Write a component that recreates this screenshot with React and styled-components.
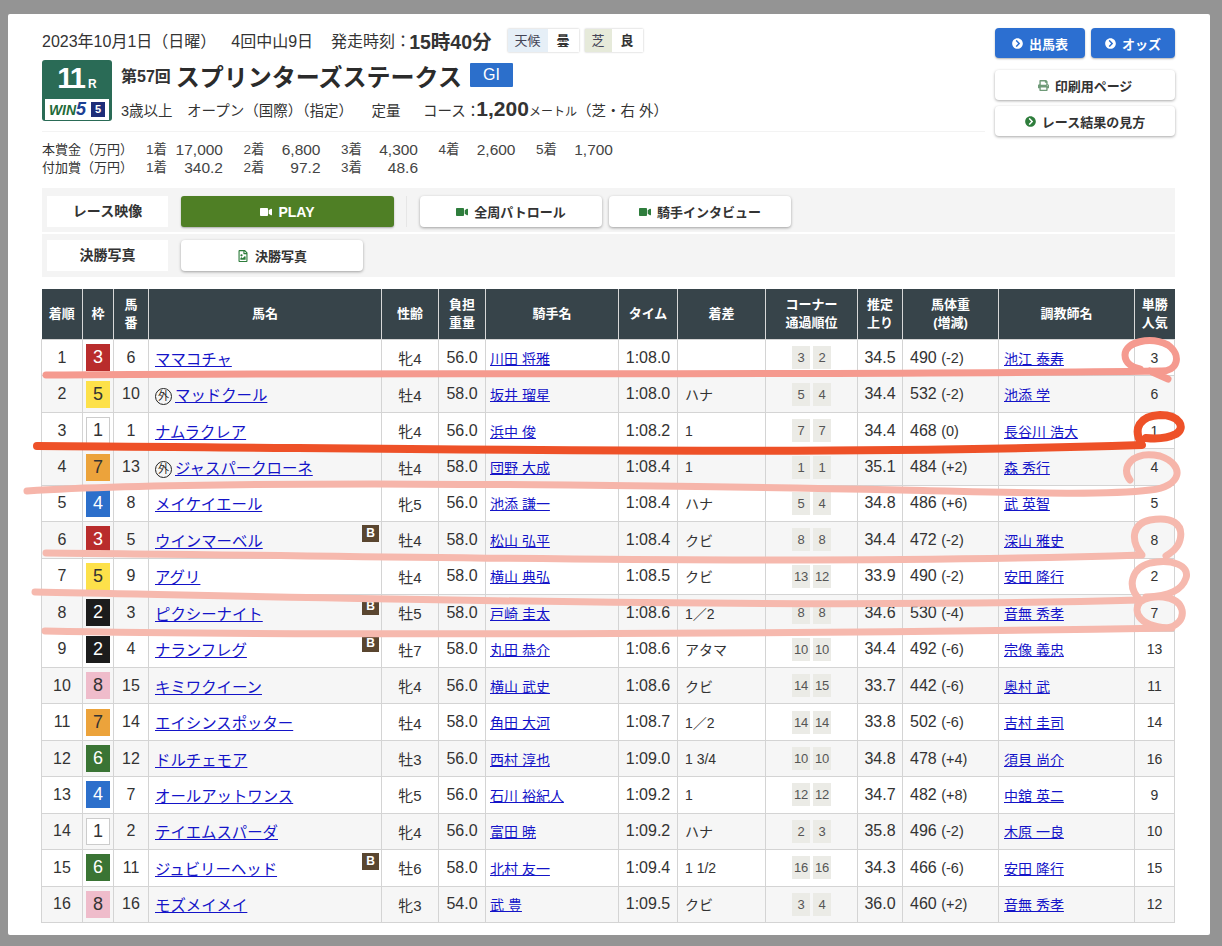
import styled, { createGlobalStyle } from "styled-components"
import { FaChevronCircleRight, FaPrint, FaVideo, FaRegFileImage } from "react-icons/fa"

const GlobalStyle = createGlobalStyle`
  html, body {
    margin: 0;
    padding: 0;
    background: #949494;
  }
  body {
    font-family: "Liberation Sans", "Noto Sans CJK JP", sans-serif;
    color: #333;
  }
`

const Page = styled.div`
  width: 1222px;
  height: 946px;
  padding: 14px 12px 11px 8px;
  box-sizing: border-box;
  overflow: hidden;
  position: relative;
`

const Sheet = styled.div`
  height: 921px;
  background: #fff;
  padding: 14px 35px 0 34px;
  box-sizing: border-box;
  border-radius: 2px;
`

const Head = styled.div`
  display: flex;
  justify-content: space-between;
  height: 160px;
`

const HeadLeft = styled.div`
  width: 943px;
`

const DateRow = styled.div`
  display: flex;
  align-items: center;
  height: 24px;
  margin-bottom: 8px;
  font-size: 16px;
  white-space: pre;
`

const DatePart = styled.span`
  margin-left: ${(p) => p.$gap}px;
`

const StartTime = styled.strong`
  font-size: 19.5px;
  margin-left: -2px;
`

const Chips = styled.div`
  display: flex;
  margin-left: ${(p) => p.$gap}px;
  box-shadow: 0 0 2px rgba(0, 0, 0, 0.25);
  font-size: 13px;
  height: 23px;
`

const ChipKey = styled.span`
  padding: 0 7px;
  line-height: 23px;
  background: ${(p) => p.$bg};
  color: #445;
`

const ChipValue = styled.span`
  padding: 0 9px;
  line-height: 23px;
  background: #fff;
  font-weight: 700;
`

const TitleRow = styled.div`
  display: flex;
  gap: 9px;
`

const RaceLogo = styled.div`
  width: 70px;
  height: 61px;
  background: #2a6b56;
  border-radius: 3px;
  padding: 3px;
  box-sizing: border-box;
  display: flex;
  flex-direction: column;
  flex: none;
`

const RaceNumber = styled.div`
  flex: 1;
  color: #fff;
  font-size: 29px;
  font-weight: 700;
  text-align: center;
  line-height: 30px;
  letter-spacing: -2px;
  small {
    font-size: 12px;
    letter-spacing: 0;
    margin-left: 4px;
  }
`

const WinFive = styled.div`
  height: 25px;
  background: #fff;
  display: flex;
  align-items: center;
  justify-content: center;
  gap: 5px;
  font-style: italic;
  font-weight: 700;
  font-size: 14px;
  color: #1f6b3a;
`

const WinBig = styled.span`
  color: #1c3f94;
  font-size: 18px;
  margin-left: -5px;
`

const FiveBox = styled.span`
  width: 14px;
  height: 15px;
  background: #1d2d78;
  color: #fff;
  font-size: 11px;
  font-style: normal;
  line-height: 15px;
  text-align: center;
`

const TitleText = styled.div`
  flex: 1;
  padding-top: 2px;
`

const RaceName = styled.div`
  display: flex;
  align-items: center;
  height: 26px;
  margin-bottom: 9px;
  font-weight: 700;
`

const Round = styled.span`
  font-size: 16px;
  margin-right: 5px;
`

const Name = styled.span`
  font-size: 24px;
  color: #2b2b2b;
`

const Grade = styled.span`
  width: 43px;
  height: 24px;
  margin-left: 8px;
  background: #2c6fcb;
  color: #fff;
  font-size: 16px;
  font-weight: 400;
  line-height: 24px;
  text-align: center;
  border-radius: 1px;
`

const Conditions = styled.div`
  display: flex;
  align-items: baseline;
  font-size: 14.5px;
  white-space: pre;
  height: 24px;
  strong {
    font-size: 21px;
    margin-left: -4px;
  }
  small {
    font-size: 12px;
  }
`

const Prizes = styled.div`
  margin-top: 10px;
  padding-top: 9px;
  border-top: 1px solid #f3f3f3;
  font-size: 13px;
  line-height: 18px;
`

const PrizeRow = styled.div`
  display: flex;
`

const PrizeLabel = styled.span`
  width: 104px;
  flex: none;
`

const Prize = styled.span`
  width: 97.5px;
  flex: none;
  display: flex;
  justify-content: space-between;
  padding-right: 20.5px;
  box-sizing: border-box;
  font-size: 15.5px;
  color: #444;
  i {
    font-style: normal;
    font-size: 13.5px;
  }
`

const HeadRight = styled.div`
  width: 180px;
  display: flex;
  flex-direction: column;
`

const BlueRow = styled.div`
  display: flex;
  gap: 6px;
  margin-bottom: 12px;
`

const BlueButton = styled.a`
  flex: ${(p) => p.$w};
  height: 30px;
  background: #2c6fd1;
  color: #fff;
  border-radius: 4px;
  font-size: 13px;
  font-weight: 700;
  display: flex;
  align-items: center;
  justify-content: center;
  gap: 6px;
  box-shadow: 0 1px 2px rgba(0, 0, 0, 0.3);
  svg {
    font-size: 11px;
  }
`

const WhiteButton = styled.a`
  height: ${(p) => p.$h || 30}px;
  width: ${(p) => p.$w || 180}px;
  background: #fff;
  color: #333;
  border-radius: 4px;
  font-size: 13px;
  font-weight: 700;
  display: flex;
  align-items: center;
  justify-content: center;
  gap: 6px;
  margin-bottom: 6px;
  box-shadow: 0 1px 3px rgba(0, 0, 0, 0.35);
  flex: none;
  svg {
    font-size: ${(p) => p.$icon || 11}px;
    color: ${(p) => p.$color || "#2e7d3c"};
  }
`

const MediaPanel = styled.div`
  display: flex;
  flex-direction: column;
  gap: 2px;
`

const MediaRow = styled.div`
  background: #f4f4f4;
  height: ${(p) => p.$h}px;
  padding: ${(p) => p.$top}px 5px 0;
  box-sizing: border-box;
  display: flex;
  gap: 7px;
`

const MediaLabel = styled.div`
  width: 121px;
  height: 31px;
  margin-right: 6px;
  background: #fff;
  font-size: 14px;
  font-weight: 700;
  line-height: 31px;
  text-align: center;
`

const PlayButton = styled.a`
  width: 213px;
  height: 31px;
  background: #4f7f25;
  color: #fff;
  border-radius: 3px;
  font-size: 14px;
  font-weight: 700;
  display: flex;
  align-items: center;
  justify-content: center;
  gap: 6px;
  box-shadow: 0 1px 2px rgba(0, 0, 0, 0.3);
  svg {
    font-size: 12px;
  }
`

const Divider = styled.span`
  width: 1px;
  height: 31px;
  margin: 0 6px 0 5px;
  background: #e6e6e6;
`

const Results = styled.table`
  width: 1133px;
  margin: 12px 0 0 -1px;
  border-collapse: collapse;
  table-layout: fixed;
  font-size: 16px;
  color: #333;
`

const Th = styled.th`
  height: 50px;
  padding: 0;
  background: #37444a;
  color: #fff;
  font-size: 13px;
  line-height: 18px;
  font-weight: 700;
  border-left: 1px solid #d8d8d8;
  &:first-child {
    border-left: 0;
  }
`

const Row = styled.tr`
  height: 36.44px;
  background: ${(p) => (p.$even ? "#f6f6f6" : "#fff")};
`

const Td = styled.td`
  padding: 0 0 0 ${(p) => p.$pad || 0}px;
  border: 1px solid #d4d4d4;
  text-align: ${(p) => (p.$pad ? "left" : "center")};
  font-size: ${(p) => p.$size || 16}px;
  white-space: nowrap;
  position: relative;
`

const Frame = styled.span`
  display: inline-block;
  width: 24px;
  height: 27px;
  line-height: 27px;
  font-size: 18px;
  vertical-align: middle;
  background: ${(p) => p.$bg};
  color: ${(p) => p.$fg};
  box-shadow: ${(p) => (p.$line ? "inset 0 0 0 1px #ccc" : "none")};
`

const HorseLink = styled.a`
  color: #1414c8;
  text-decoration: underline;
  font-size: 15.4px;
`

const PersonLink = styled.a`
  color: #1414c8;
  text-decoration: underline;
  font-size: 14px;
`

const ForeignMark = styled.span`
  display: inline-block;
  width: 15px;
  height: 15px;
  margin-right: 3px;
  border: 1px solid #222;
  border-radius: 50%;
  font-size: 11px;
  line-height: 15px;
  text-align: center;
  vertical-align: 1px;
  color: #222;
`

const BlinkerMark = styled.span`
  position: absolute;
  top: 3px;
  right: 2px;
  width: 17px;
  height: 17px;
  background: #5a4630;
  color: #fff;
  font-size: 12px;
  font-weight: 700;
  line-height: 17px;
  text-align: center;
`

const Corners = styled.span`
  display: inline-flex;
  gap: 3px;
  vertical-align: middle;
`

const Corner = styled.span`
  width: 18px;
  height: 23px;
  line-height: 23px;
  background: #ebebe6;
  color: #555;
  font-size: 13px;
  letter-spacing: -0.3px;
`

const Weight = styled.span`
  small {
    font-size: 14.5px;
  }
`

const Scribble = styled.svg`
  position: absolute;
  left: 0;
  top: 0;
  pointer-events: none;
`

const frames = {
  1: { bg: "#fff", fg: "#333", line: true },
  2: { bg: "#1c1c1c", fg: "#fff" },
  3: { bg: "#b92c2c", fg: "#fff" },
  4: { bg: "#2c6fcb", fg: "#fff" },
  5: { bg: "#fde14a", fg: "#333" },
  6: { bg: "#3a7434", fg: "#fff" },
  7: { bg: "#eca33b", fg: "#333" },
  8: { bg: "#efbccb", fg: "#333" },
}

const columns = [
  { w: 41, label: ["着順"] },
  { w: 31, label: ["枠"] },
  { w: 35, label: ["馬", "番"] },
  { w: 233, label: ["馬名"] },
  { w: 57, label: ["性齢"] },
  { w: 47, label: ["負担", "重量"] },
  { w: 133, label: ["騎手名"] },
  { w: 59, label: ["タイム"] },
  { w: 88, label: ["着差"] },
  { w: 92, label: ["コーナー", "通過順位"] },
  { w: 45, label: ["推定", "上り"] },
  { w: 96, label: ["馬体重", "(増減)"] },
  { w: 136, label: ["調教師名"] },
  { w: 40, label: ["単勝", "人気"] },
]

const runners = [
  [3, 6, "ママコチャ", "", 0, "牝4", "56.0", "川田 将雅", "1:08.0", "", [3, 2], "34.5", 490, "(-2)", "池江 泰寿", 3],
  [5, 10, "マッドクール", "外", 0, "牡4", "58.0", "坂井 瑠星", "1:08.0", "ハナ", [5, 4], "34.4", 532, "(-2)", "池添 学", 6],
  [1, 1, "ナムラクレア", "", 0, "牝4", "56.0", "浜中 俊", "1:08.2", "1", [7, 7], "34.4", 468, "(0)", "長谷川 浩大", 1],
  [7, 13, "ジャスパークローネ", "外", 0, "牡4", "58.0", "団野 大成", "1:08.4", "1", [1, 1], "35.1", 484, "(+2)", "森 秀行", 4],
  [4, 8, "メイケイエール", "", 0, "牝5", "56.0", "池添 謙一", "1:08.4", "ハナ", [5, 4], "34.8", 486, "(+6)", "武 英智", 5],
  [3, 5, "ウインマーベル", "", 1, "牡4", "58.0", "松山 弘平", "1:08.4", "クビ", [8, 8], "34.4", 472, "(-2)", "深山 雅史", 8],
  [5, 9, "アグリ", "", 0, "牡4", "58.0", "横山 典弘", "1:08.5", "クビ", [13, 12], "33.9", 490, "(-2)", "安田 隆行", 2],
  [2, 3, "ピクシーナイト", "", 1, "牡5", "58.0", "戸崎 圭太", "1:08.6", "1／2", [8, 8], "34.6", 530, "(-4)", "音無 秀孝", 7],
  [2, 4, "ナランフレグ", "", 1, "牡7", "58.0", "丸田 恭介", "1:08.6", "アタマ", [10, 10], "34.4", 492, "(-6)", "宗像 義忠", 13],
  [8, 15, "キミワクイーン", "", 0, "牝4", "56.0", "横山 武史", "1:08.6", "クビ", [14, 15], "33.7", 442, "(-6)", "奥村 武", 11],
  [7, 14, "エイシンスポッター", "", 0, "牡4", "58.0", "角田 大河", "1:08.7", "1／2", [14, 14], "33.8", 502, "(-6)", "吉村 圭司", 14],
  [6, 12, "ドルチェモア", "", 0, "牡3", "56.0", "西村 淳也", "1:09.0", "1 3/4", [10, 10], "34.8", 478, "(+4)", "須貝 尚介", 16],
  [4, 7, "オールアットワンス", "", 0, "牝5", "56.0", "石川 裕紀人", "1:09.2", "1", [12, 12], "34.7", 482, "(+8)", "中舘 英二", 9],
  [1, 2, "テイエムスパーダ", "", 0, "牝4", "56.0", "富田 暁", "1:09.2", "ハナ", [2, 3], "35.8", 496, "(-2)", "木原 一良", 10],
  [6, 11, "ジュビリーヘッド", "", 1, "牡6", "58.0", "北村 友一", "1:09.4", "1 1/2", [16, 16], "34.3", 466, "(-6)", "安田 隆行", 15],
  [8, 16, "モズメイメイ", "", 0, "牝3", "54.0", "武 豊", "1:09.5", "クビ", [3, 4], "36.0", 460, "(+2)", "音無 秀孝", 12],
]

const mainPrizes = [["1着", "17,000"], ["2着", "6,800"], ["3着", "4,300"], ["4着", "2,600"], ["5着", "1,700"]]
const extraPrizes = [["1着", "340.2"], ["2着", "97.2"], ["3着", "48.6"]]

// hand drawn marks on top of the table
const marks = [
  { color: "#f59a8f", w: 7, d: "M46 375 C300 372 800 376 1160 371 C1178 372 1182 355 1168 345 C1150 336 1125 342 1125 355 C1125 364 1134 368 1140 369 M1150 371 L1168 379" },
  { color: "#ee5128", w: 8, d: "M37 446 C400 448 800 456 1142 445 C1132 428 1140 416 1160 415 C1180 415 1186 428 1176 434 C1166 439 1155 439 1146 438" },
  { color: "#f6b5aa", w: 7, d: "M27 491 C200 480 600 484 900 490 C1000 492 1100 496 1150 490 C1182 487 1186 465 1160 456 C1132 450 1120 468 1130 480" },
  { color: "#f6b9ae", w: 7, d: "M46 553 C400 556 800 566 1142 555 C1130 540 1132 524 1150 520 C1172 516 1184 524 1180 540 C1178 548 1172 552 1166 556" },
  { color: "#f6b9ae", w: 7, d: "M35 592 C300 597 800 610 1140 600 C1126 586 1132 568 1150 563 C1172 558 1190 566 1186 578 C1182 590 1170 596 1146 597" },
  { color: "#f6b9ae", w: 7, d: "M45 631 C300 636 800 634 1172 628 C1140 628 1132 612 1140 602 C1150 594 1178 594 1182 610 C1184 620 1176 626 1168 628" },
]

function RaceResult() {
  return (
    <Results>
      <colgroup>
        {columns.map((c, i) => (
          <col key={i} style={{ width: c.w }} />
        ))}
      </colgroup>
      <thead>
        <tr>
          {columns.map((c, i) => (
            <Th key={i}>
              {c.label.map((l) => (
                <div key={l}>{l}</div>
              ))}
            </Th>
          ))}
        </tr>
      </thead>
      <tbody>
        {runners.map((r, i) => {
          const frame = frames[r[0]]
          return (
            <Row key={i} $even={i % 2 === 1}>
              <Td>{i + 1}</Td>
              <Td>
                <Frame $bg={frame.bg} $fg={frame.fg} $line={frame.line}>{r[0]}</Frame>
              </Td>
              <Td>{r[1]}</Td>
              <Td $pad={6}>
                {r[3] && <ForeignMark>{r[3]}</ForeignMark>}
                <HorseLink>{r[2]}</HorseLink>
                {r[4] === 1 && <BlinkerMark>B</BlinkerMark>}
              </Td>
              <Td $size={15}>{r[5]}</Td>
              <Td>{r[6]}</Td>
              <Td $pad={4}><PersonLink>{r[7]}</PersonLink></Td>
              <Td>{r[8]}</Td>
              <Td $pad={7} $size={14}>{r[9]}</Td>
              <Td>
                <Corners>
                  <Corner>{r[10][0]}</Corner>
                  <Corner>{r[10][1]}</Corner>
                </Corners>
              </Td>
              <Td>{r[11]}</Td>
              <Td $pad={7}>
                <Weight>{r[12]} <small>{r[13]}</small></Weight>
              </Td>
              <Td $pad={5}><PersonLink>{r[14]}</PersonLink></Td>
              <Td $size={14}>{r[15]}</Td>
            </Row>
          )
        })}
      </tbody>
    </Results>
  )
}

export default function App() {
  return (
    <Page>
      <GlobalStyle />
      <Sheet>
        <Head>
          <HeadLeft>
            <DateRow>
              2023年10月1日（日曜）
              <DatePart $gap={15}>4回中山9日</DatePart>
              <DatePart $gap={18}>発走時刻：</DatePart>
              <StartTime>15時40分</StartTime>
              <Chips $gap={16}>
                <ChipKey $bg="#e6eff7">天候</ChipKey>
                <ChipValue>曇</ChipValue>
              </Chips>
              <Chips $gap={6}>
                <ChipKey $bg="#e6eada">芝</ChipKey>
                <ChipValue>良</ChipValue>
              </Chips>
            </DateRow>
            <TitleRow>
              <RaceLogo>
                <RaceNumber>11<small>R</small></RaceNumber>
                <WinFive>
                  WIN<WinBig>5</WinBig>
                  <FiveBox>5</FiveBox>
                </WinFive>
              </RaceLogo>
              <TitleText>
                <RaceName>
                  <Round>第57回</Round>
                  <Name>スプリンターズステークス</Name>
                  <Grade>GI</Grade>
                </RaceName>
                <Conditions>
                  3歳以上　オープン（国際）（指定） 　定量　  コース：<strong>1,200</strong><small>メートル</small>（芝・右 外）
                </Conditions>
              </TitleText>
            </TitleRow>
            <Prizes>
              <PrizeRow>
                <PrizeLabel>本賞金（万円）</PrizeLabel>
                {mainPrizes.map((p) => (
                  <Prize key={p[0]}><i>{p[0]}</i>{p[1]}</Prize>
                ))}
              </PrizeRow>
              <PrizeRow>
                <PrizeLabel>付加賞（万円）</PrizeLabel>
                {extraPrizes.map((p) => (
                  <Prize key={p[0]}><i>{p[0]}</i>{p[1]}</Prize>
                ))}
              </PrizeRow>
            </Prizes>
          </HeadLeft>
          <HeadRight>
            <BlueRow>
              <BlueButton $w={90}><FaChevronCircleRight />出馬表</BlueButton>
              <BlueButton $w={84}><FaChevronCircleRight />オッズ</BlueButton>
            </BlueRow>
            <WhiteButton $color="#6f9a78"><FaPrint />印刷用ページ</WhiteButton>
            <WhiteButton><FaChevronCircleRight />レース結果の見方</WhiteButton>
          </HeadRight>
        </Head>
        <MediaPanel>
          <MediaRow $h={44} $top={8}>
            <MediaLabel>レース映像</MediaLabel>
            <PlayButton><FaVideo />PLAY</PlayButton>
            <Divider />
            <WhiteButton $w={182} $h={31} $icon={12}><FaVideo />全周パトロール</WhiteButton>
            <WhiteButton $w={182} $h={31} $icon={12}><FaVideo />騎手インタビュー</WhiteButton>
          </MediaRow>
          <MediaRow $h={43} $top={6}>
            <MediaLabel>決勝写真</MediaLabel>
            <WhiteButton $w={182} $h={31} $icon={12}><FaRegFileImage />決勝写真</WhiteButton>
          </MediaRow>
        </MediaPanel>
        <RaceResult />
      </Sheet>
      <Scribble width="1222" height="946" fill="none" strokeLinecap="round" strokeLinejoin="round">
        {marks.map((m, i) => (
          <path key={i} d={m.d} stroke={m.color} strokeWidth={m.w} />
        ))}
      </Scribble>
    </Page>
  )
}
